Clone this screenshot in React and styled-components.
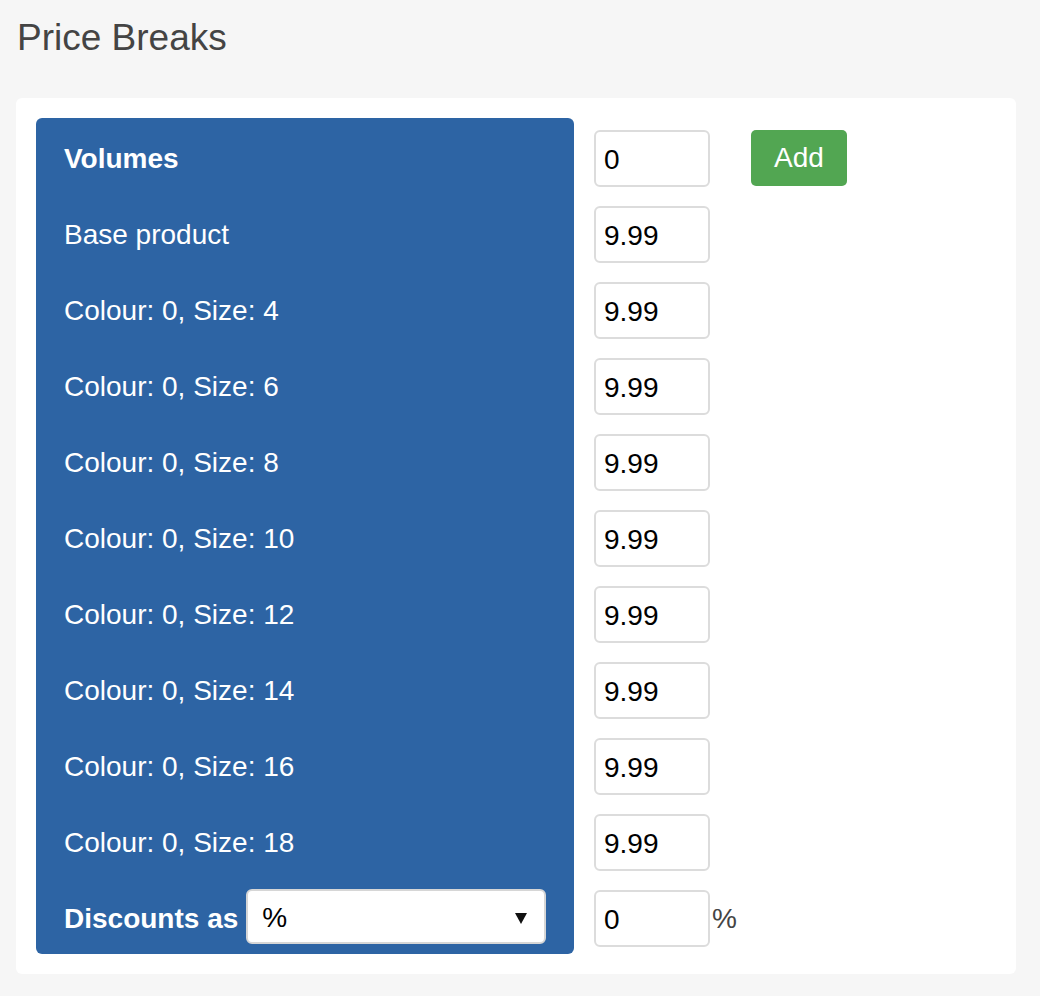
import React from "react";
import styled, { createGlobalStyle } from "styled-components";

const Global = createGlobalStyle`
  html, body { margin: 0; padding: 0; background: #f6f6f6; }
  body { font-family: "Liberation Sans", Arial, sans-serif; }
  * { box-sizing: border-box; }
`;

const Page = styled.div`
  padding: 16px 24px 22px 16px;
`;

const Title = styled.h1`
  margin: 0 0 38px 1px;
  font-size: 37px;
  line-height: 44px;
  font-weight: 400;
  color: #444;
`;

const Card = styled.div`
  background: #fff;
  border-radius: 6px;
  padding: 20px;
  display: flex;
  gap: 20px;
  align-items: flex-start;
`;

const Panel = styled.div`
  width: 538px;
  background: #2d64a4;
  border-radius: 6px;
  padding: 0 28px;
  display: flex;
  flex-direction: column;
`;

const Label = styled.div`
  height: 76px;
  display: flex;
  align-items: center;
  padding-top: 5px;
  color: #fff;
  font-size: 28px;
  white-space: nowrap;
  font-weight: ${(p) => (p.$bold ? 700 : 400)};
  gap: 8px;
`;

const Fields = styled.div`
  display: flex;
  flex-direction: column;
`;

const FieldRow = styled.div`
  height: 76px;
  padding-top: 12px;
  display: flex;
  align-items: flex-start;
`;

const Input = styled.input`
  width: 116px;
  height: 57px;
  border: 2px solid #dcdcdc;
  border-radius: 6px;
  padding: 2px 0 0 8px;
  font-family: inherit;
  font-size: 28px;
  color: #000;
  background: #fff;
  outline: none;
`;

const Unit = styled.span`
  align-self: center;
  margin-top: -6px;
  padding-left: 2px;
  font-size: 28px;
  color: #444;
`;

const AddButton = styled.button`
  margin-left: 41px;
  width: 96px;
  height: 56px;
  border: none;
  border-radius: 5px;
  background: #52a652;
  color: #fff;
  font-family: inherit;
  font-size: 28px;
  padding: 0;
  cursor: pointer;
`;

const SelectWrap = styled.div`
  position: relative;
  flex: 0 0 300px;
  width: 300px;
  height: 55px;
  margin-top: -4px;
`;

const Select = styled.select`
  appearance: none;
  -webkit-appearance: none;
  width: 100%;
  height: 100%;
  border: 2px solid #d6d6d6;
  border-radius: 6px;
  background: #fff;
  padding: 2px 0 0 14px;
  font-family: inherit;
  font-size: 28px;
  color: #000;
  outline: none;
`;

const Arrow = styled.span`
  position: absolute;
  right: 19px;
  top: 50%;
  margin-top: -4px;
  width: 0;
  height: 0;
  border-left: 6px solid transparent;
  border-right: 6px solid transparent;
  border-top: 11px solid #111;
  pointer-events: none;
`;

const sizes = [4, 6, 8, 10, 12, 14, 16, 18];

export default function App() {
  return (
    <>
      <Global />
      <Page>
        <Title>Price Breaks</Title>
        <Card>
          <Panel>
            <Label $bold>Volumes</Label>
            <Label>Base product</Label>
            {sizes.map((s) => (
              <Label key={s}>Colour: 0, Size: {s}</Label>
            ))}
            <Label $bold>
              Discounts as
              <SelectWrap>
                <Select defaultValue="%">
                  <option value="%">%</option>
                  <option value="fixed">Fixed</option>
                </Select>
                <Arrow />
              </SelectWrap>
            </Label>
          </Panel>
          <Fields>
            <FieldRow>
              <Input defaultValue="0" />
              <AddButton>Add</AddButton>
            </FieldRow>
            <FieldRow>
              <Input defaultValue="9.99" />
            </FieldRow>
            {sizes.map((s) => (
              <FieldRow key={s}>
                <Input defaultValue="9.99" />
              </FieldRow>
            ))}
            <FieldRow>
              <Input defaultValue="0" />
              <Unit>%</Unit>
            </FieldRow>
          </Fields>
        </Card>
      </Page>
    </>
  );
}
